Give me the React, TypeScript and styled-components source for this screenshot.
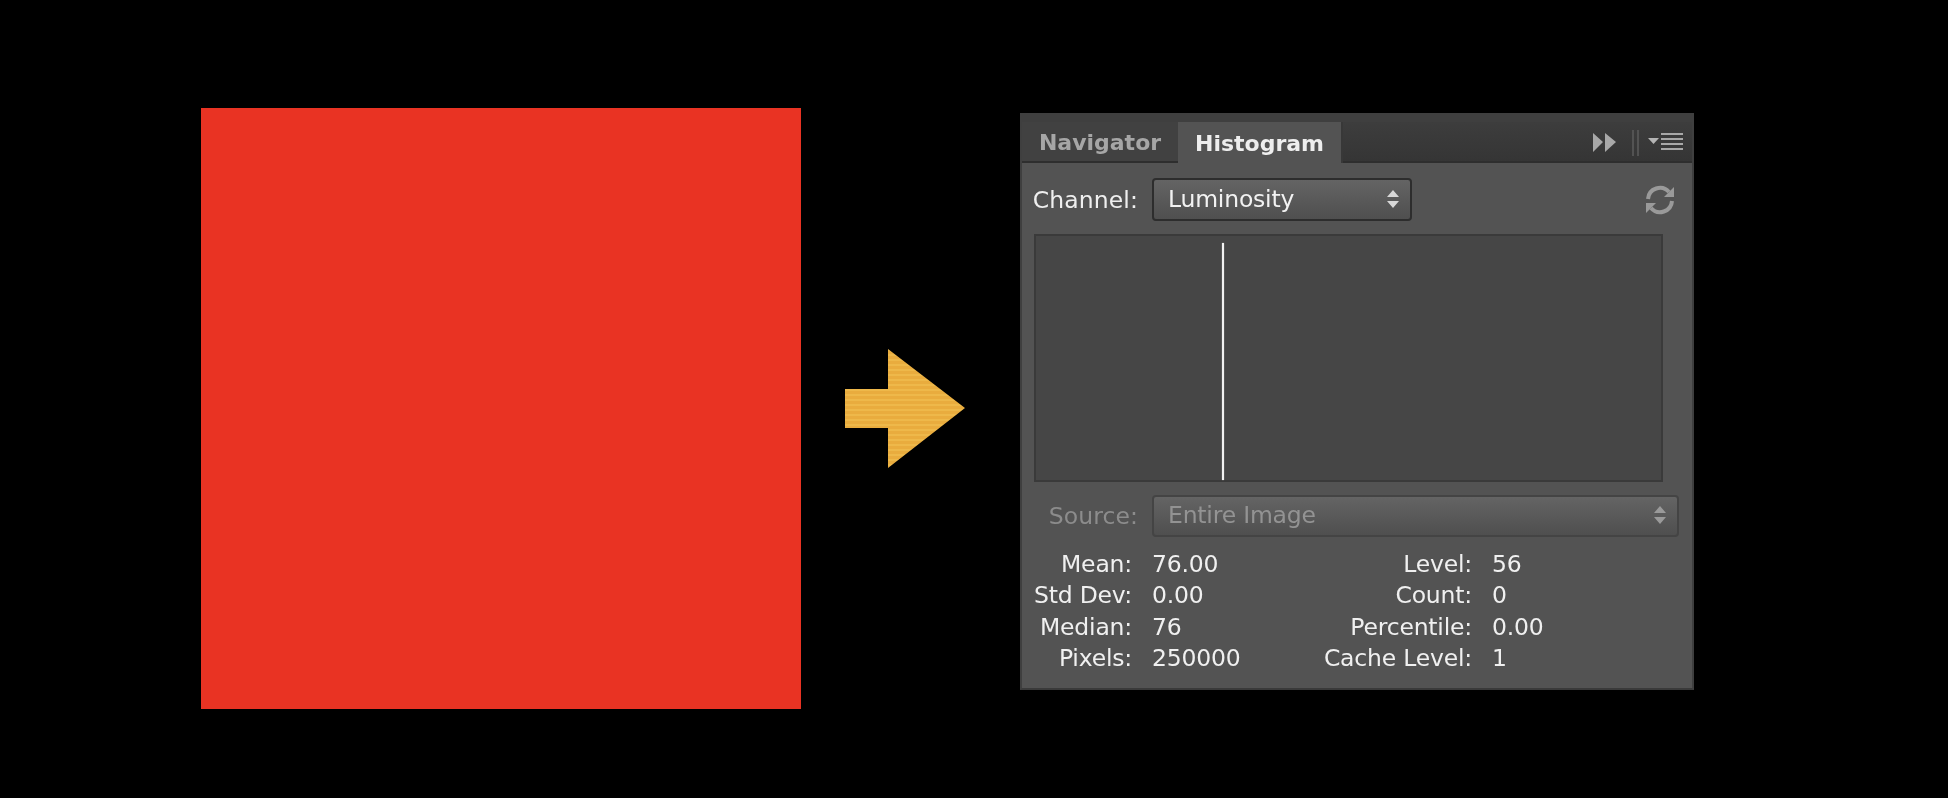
import * as React from 'react'
import styled, { createGlobalStyle } from 'styled-components'

const GlobalStyle = createGlobalStyle`
  html, body {
    margin: 0;
    background: #000;
  }
  body {
    font-family: "DejaVu Sans", "Liberation Sans", sans-serif;
  }
`

const Page = styled.div`
  width: 1948px;
  height: 798px;
  box-sizing: border-box;
  padding: 108px 0 0 201px;
  display: flex;
  align-items: flex-start;
  background: #000;
  overflow: hidden;
`
const Swatch = styled.div`
  width: 600px;
  height: 601px;
  background: #e93323;
  flex: none;
`
const ArrowWrap = styled.svg`
  width: 120px;
  height: 120px;
  margin: 241px 55px 0 44px;
  flex: none;
  display: block;
`
const Panel = styled.div`
  width: 674px;
  height: 577px;
  margin-top: 5px;
  box-sizing: border-box;
  flex: none;
  background: #535353;
  border-top: 9px solid #3f3f3f;
  border-left: 2px solid #3f3f3f;
  border-right: 2px solid #3f3f3f;
  border-bottom: 2px solid #3a3a3a;
  display: flex;
  flex-direction: column;
  color: #f0f0f0;
  font-size: 23.5px;
  letter-spacing: -0.2px;
`
const TabBar = styled.div`
  height: 41px;
  flex: none;
  display: flex;
  align-items: stretch;
  background: linear-gradient(#3d3d3d, #353535);
  border-bottom: 2px solid #2e2e2e;
  box-sizing: border-box;
  padding-right: 3px;
`
const Tab = styled.div<{ $active?: boolean }>`
  width: ${p => (p.$active ? '165px' : '156px')};
  box-sizing: border-box;
  margin-bottom: ${p => (p.$active ? '-2px' : '0')};
  padding-top: 2px;
  display: flex;
  align-items: center;
  justify-content: center;
  font-weight: bold;
  font-size: 22px;
  letter-spacing: 0;
  color: ${p => (p.$active ? '#eeeeee' : '#a6a6a6')};
  background: ${p => (p.$active ? '#535353' : '#414141')};
  border-right: ${p => (p.$active ? '2px solid #383838' : 'none')};
  filter: blur(0.5px);
`
const BarTools = styled.div`
  margin-left: auto;
  padding-top: 2px;
  display: flex;
  align-items: center;
`
const Body = styled.div`
  flex: 1;
  display: flex;
  flex-direction: column;
  padding: 15px 13px 0 10px;
`
const FieldRow = styled.div`
  display: flex;
  align-items: center;
`
const FieldLabel = styled.div<{ $dim?: boolean }>`
  width: 120px;
  flex: none;
  box-sizing: border-box;
  padding-right: 14px;
  text-align: right;
  letter-spacing: 0.1px;
  color: ${p => (p.$dim ? '#8c8c8c' : '#efefef')};
  filter: blur(0.5px);
`
const Select = styled.div<{ $dim?: boolean; $width?: string }>`
  flex: ${p => (p.$width ? 'none' : '1')};
  width: ${p => p.$width || 'auto'};
  height: ${p => (p.$dim ? '42px' : '43px')};
  box-sizing: border-box;
  display: flex;
  align-items: center;
  justify-content: space-between;
  padding: 0 10px 2px 14px;
  border-radius: 4px;
  border: 2px solid ${p => (p.$dim ? '#444' : '#2d2d2d')};
  background: linear-gradient(#646464, #4f4f4f);
  color: ${p => (p.$dim ? '#939393' : '#f2f2f2')};
`
const SelectText = styled.span`
  filter: blur(0.5px);
`
const Spin = styled.svg`
  width: 14px;
  height: 22px;
  flex: none;
`
const Refresh = styled.svg`
  width: 34px;
  height: 34px;
  margin-left: auto;
  margin-right: 2px;
  flex: none;
`
const HistogramBox = styled.div`
  width: 629px;
  height: 248px;
  margin: 13px 0 13px 2px;
  box-sizing: border-box;
  padding: 7px 0 0 186px;
  flex: none;
  background: #464646;
  border: 2px solid #3a3a3a;
`
const Spike = styled.div`
  width: 2px;
  height: 100%;
  background: #f2f2f2;
  box-shadow: 0 0 1px #f2f2f2;
`
const Stats = styled.div`
  margin-top: 11px;
  margin-left: 2px;
  display: grid;
  grid-template-columns: 118px 150px 190px 1fr;
  grid-auto-rows: 31.5px;
  align-items: center;
  filter: blur(0.5px);
`
const StatLabel = styled.div`
  text-align: right;
  padding-right: 20px;
  white-space: nowrap;
`
const StatValue = styled.div`
  white-space: nowrap;
`

const stats = [
  ['Mean:', '76.00', 'Level:', '56'],
  ['Std Dev:', '0.00', 'Count:', '0'],
  ['Median:', '76', 'Percentile:', '0.00'],
  ['Pixels:', '250000', 'Cache Level:', '1'],
]

const SpinIcon = ({ color }: { color: string }) => (
  <Spin viewBox="0 0 14 22">
    <path d="M7 2 L13 9 H1 Z M7 20 L13 13 H1 Z" fill={color} />
  </Spin>
)

const App = () => (
  <Page>
    <GlobalStyle />
    <Swatch />
    <ArrowWrap viewBox="0 0 120 120">
      <defs>
        <pattern id="stripes" width="4" height="5" patternUnits="userSpaceOnUse">
          <rect width="4" height="5" fill="#e9ac3e" />
          <rect width="4" height="2" fill="#eeb84a" />
        </pattern>
      </defs>
      <path d="M0 40 H43 V0 L120 59 L43 119 V79 H0 Z" fill="url(#stripes)" />
    </ArrowWrap>
    <Panel>
      <TabBar>
        <Tab>Navigator</Tab>
        <Tab $active>Histogram</Tab>
        <BarTools>
          <svg width="96" height="30" viewBox="0 0 96 30">
            <path d="M0 5 L10 14 L0 24 Z M12 5 L23 14 L12 24 Z" fill="#a8a8a8" />
            <path d="M40 2 V28 M45 2 V28" stroke="#5c5c5c" strokeWidth="1.5" />
            <path d="M55 10 H66 L60.5 16 Z" fill="#b4b4b4" />
            <path d="M68 6 H90 M68 11 H90 M68 16 H90 M68 21 H90" stroke="#a8a8a8" strokeWidth="2" />
          </svg>
        </BarTools>
      </TabBar>
      <Body>
        <FieldRow>
          <FieldLabel>Channel:</FieldLabel>
          <Select $width="260px">
            <SelectText>Luminosity</SelectText>
            <SpinIcon color="#d8d8d8" />
          </Select>
          <Refresh viewBox="0 0 34 34">
            <path d="M5 16 A12 12 0 0 1 26 9" fill="none" stroke="#9a9a9a" strokeWidth="4" />
            <path d="M31 4 V14 H21 Z" fill="#9a9a9a" />
            <path d="M29 18 A12 12 0 0 1 8 25" fill="none" stroke="#9a9a9a" strokeWidth="4" />
            <path d="M3 30 V20 H13 Z" fill="#9a9a9a" />
          </Refresh>
        </FieldRow>
        <HistogramBox>
          <Spike />
        </HistogramBox>
        <FieldRow>
          <FieldLabel $dim>Source:</FieldLabel>
          <Select $dim>
            <SelectText>Entire Image</SelectText>
            <SpinIcon color="#9a9a9a" />
          </Select>
        </FieldRow>
        <Stats>
          {stats.map(row => (
            <React.Fragment key={row[0]}>
              <StatLabel>{row[0]}</StatLabel>
              <StatValue>{row[1]}</StatValue>
              <StatLabel>{row[2]}</StatLabel>
              <StatValue>{row[3]}</StatValue>
            </React.Fragment>
          ))}
        </Stats>
      </Body>
    </Panel>
  </Page>
)

export default App
